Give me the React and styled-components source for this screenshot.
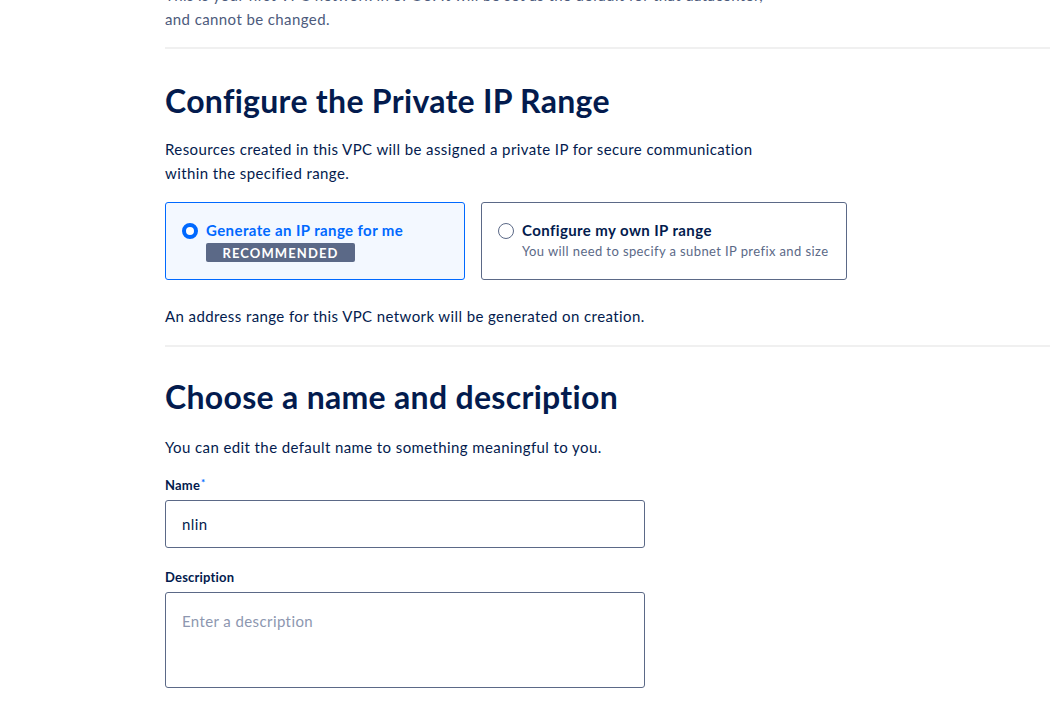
import React from "react";
import styled, { createGlobalStyle } from "styled-components";

const Global = createGlobalStyle`
  html, body { margin: 0; padding: 0; background: #fff; }
  body { font-family: "Lato", "Open Sans", sans-serif; color: #031b4e; overflow: hidden; letter-spacing: 0.4px; }
  * { box-sizing: border-box; }
`;

const Page = styled.main`
  padding-left: 165px;
  margin-top: -17px;
  display: flex;
  flex-direction: column;
`;

const Intro = styled.p`
  margin: 0;
  font-size: 15px;
  line-height: 24px;
  color: #4d5b7c;
  white-space: nowrap;
`;

const Divider = styled.hr`
  border: 0;
  height: 2px;
  background: #f0f0f0;
  margin: ${(p) => p.$top}px 0 0 0;
  width: 885px;
`;

const Heading = styled.h2`
  margin: ${(p) => p.$top ?? 30}px 0 0 0;
  font-size: 32px;
  line-height: 40px;
  font-weight: 700;
  letter-spacing: 0.3px;
  color: #031b4e;
`;

const Text = styled.p`
  margin: ${(p) => p.$top ?? 18}px 0 0 0;
  font-size: 15px;
  line-height: 24px;
  color: #031b4e;
  max-width: 610px;
`;

const Options = styled.div`
  display: flex;
  gap: 16px;
  margin-top: 17px;
`;

const Option = styled.label`
  display: flex;
  align-items: flex-start;
  gap: 8px;
  width: ${(p) => p.$w}px;
  height: 78px;
  padding: 17px 16px 0 16px;
  border: 1px solid ${(p) => (p.$selected ? "#0069ff" : "#5b6987")};
  background: ${(p) => (p.$selected ? "#f3f8ff" : "#fff")};
  border-radius: 3px;
  cursor: pointer;
`;

const Radio = styled.span`
  flex: none;
  width: 16px;
  height: 16px;
  margin-top: 3px;
  border-radius: 50%;
  border: ${(p) => (p.$checked ? "4px solid #0069ff" : "1px solid #5b6987")};
  background: #fff;
`;

const OptionBody = styled.div`
  display: flex;
  flex-direction: column;
  align-items: flex-start;
`;

const OptionTitle = styled.span`
  font-size: 15px;
  line-height: 20px;
  font-weight: 700;
  color: ${(p) => (p.$selected ? "#0069ff" : "#031b4e")};
`;

const OptionSub = styled.span`
  margin-top: 3px;
  font-size: 13px;
  line-height: 17px;
  color: #5b6987;
`;

const Badge = styled.span`
  margin-top: 3px;
  display: inline-flex;
  align-items: center;
  justify-content: center;
  width: 149px;
  height: 19px;
  background: #5b6987;
  color: #fff;
  border-radius: 2px;
  font-size: 13px;
  font-weight: 700;
  letter-spacing: 1.1px;
  text-transform: uppercase;
`;

const Field = styled.div`
  display: flex;
  flex-direction: column;
  margin-top: ${(p) => p.$top}px;
`;

const Label = styled.label`
  font-size: 13px;
  line-height: 20px;
  font-weight: 700;
  letter-spacing: 0.2px;
  color: #031b4e;
`;

const Req = styled.span`
  color: #0069ff;
  font-size: 10px;
  line-height: 0;
  vertical-align: 4px;
  margin-left: 1px;
`;

const Input = styled.input`
  margin-top: 5px;
  width: 480px;
  height: 48px;
  padding: 0 16px;
  border: 1px solid #5b6987;
  border-radius: 3px;
  font-family: "Lato", "Open Sans", sans-serif;
  font-size: 15px;
  letter-spacing: 0.4px;
  color: #031b4e;
  outline: none;
`;

const TextArea = styled.textarea`
  margin-top: 5px;
  width: 480px;
  height: 96px;
  padding: 18px 16px;
  border: 1px solid #5b6987;
  border-radius: 3px;
  font-family: "Lato", "Open Sans", sans-serif;
  font-size: 15px;
  letter-spacing: 0.4px;
  line-height: 20px;
  color: #031b4e;
  resize: none;
  outline: none;
  &::placeholder { color: #8d97b0; }
`;

export default function App() {
  return (
    <>
      <Global />
      <Page>
        <Intro>
          This is your first VPC network in SFO3. It will be set as the default for that datacenter,
          <br />
          and cannot be changed.
        </Intro>
        <Divider $top={16} />
        <Heading $top={32}>Configure the Private IP Range</Heading>
        <Text $top={16}>
          Resources created in this VPC will be assigned a private IP for secure communication
          <br />
          within the specified range.
        </Text>
        <Options>
          <Option $w={300} $selected>
            <Radio $checked />
            <OptionBody>
              <OptionTitle $selected>Generate an IP range for me</OptionTitle>
              <Badge>Recommended</Badge>
            </OptionBody>
          </Option>
          <Option $w={366}>
            <Radio />
            <OptionBody>
              <OptionTitle>Configure my own IP range</OptionTitle>
              <OptionSub>You will need to specify a subnet IP prefix and size</OptionSub>
            </OptionBody>
          </Option>
        </Options>
        <Text $top={24}>An address range for this VPC network will be generated on creation.</Text>
        <Divider $top={17} />
        <Heading>Choose a name and description</Heading>
        <Text>You can edit the default name to something meaningful to you.</Text>
        <Field $top={16}>
          <Label>
            Name<Req>*</Req>
          </Label>
          <Input defaultValue="nlin" />
        </Field>
        <Field $top={19}>
          <Label>Description</Label>
          <TextArea placeholder="Enter a description" />
        </Field>
      </Page>
    </>
  );
}
